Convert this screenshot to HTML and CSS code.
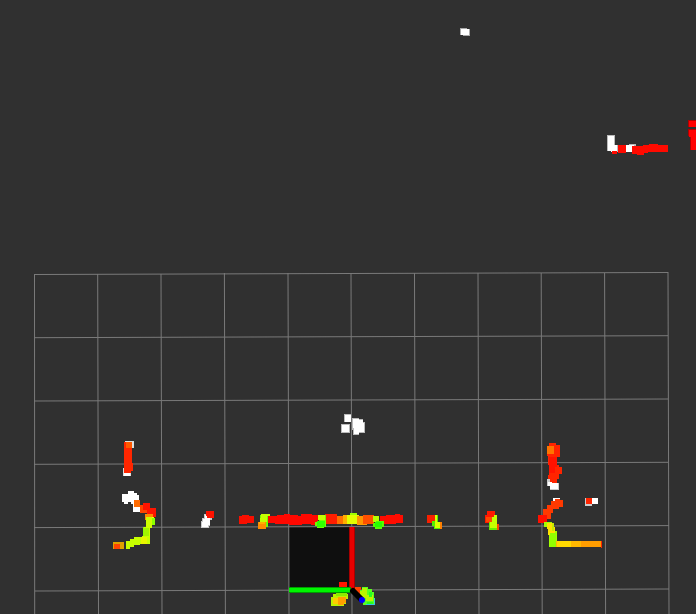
FILE: index.html
```html
<!DOCTYPE html>
<html lang="en">
<head>
<meta charset="utf-8">
<meta name="viewport" content="width=device-width, initial-scale=1">
<title>Point cloud view</title>
<link rel="stylesheet" href="styles.css">
</head>
<body>
<main class="viewport">
<svg class="scene" viewBox="0 0 696 614" role="img" aria-label="Laser scan points over a ground grid">
  <!-- occupied cell -->
  <path class="cell" d="M289 527H352V591H289z"/>

  <!-- ground grid -->
  <g class="grid">
    <path d="M34.5 274L34.7 614M97.7 274L98.5 614M161 274L162 614M224.4 273L225.4 614M288 273L289 614M351 273L352 614M414.5 273L415.5 614M478 273L479 614M541.2 273L542.2 614M604.6 273L605.6 614M668 272L669 614"/>
    <path d="M34 274.5L668 272.5M34 337.7L668 335.7M34 401L668 399M34 464.3L668 462.3M34 527.6L669 525.6M35 591L669 589"/>
  </g>

  <g class="points">
    <!-- far returns -->
    <path fill="#aaa" d="M460 28h7v1h3v7h-7v-1h-3z"/>
    <path fill="#fff" d="M461 29h8v6h-8z"/>
    <path fill="#bbb" d="M607 135h8v10h3v7h-7v-1h-4zM626 145h3v-1h7v8h-10zM645 145h3v3h-3z"/>
    <path fill="#fff" d="M608 136h6v9h3v7h-6v-1h-3zM626 145h8v7h-8z"/>
    <path fill="#ff0a00" d="M612 151h5v3h-5zM618 145h8v8h-8zM632 146h11v-1h6v-1h9v1h10v7h-20v1h-4v2h-7v-1h-5z"/>
    <path fill="#b00000" d="M688 120h8v7h-8zM688 129h8v21h-6v-14h-2z"/>
    <path fill="#f00" d="M689 121h7v6h-7zM689 130h7v20h-5v-13h-2z"/>

    <!-- centre white cluster -->
    <path fill="#bbb" d="M344 414h7v8h-7zM341 424h9v9h-9zM352 418h7v1h4v3h2v11h-6v2h-6v-5h-1z"/>
    <path fill="#fff" d="M345 415h6v7h-6zM342 425h7v7h-7zM353 419h6v1h4v3h1v9h-5v2h-5v-6h-1z"/>

    <!-- left column -->
    <path fill="#ddd" d="M125 441h9v7h-9zM123 468h8v8h-8z"/>
    <path fill="#fff" d="M124 469h6v7h-6z"/>
    <path fill="#ff2600" d="M124 442h8v21h1v8h-2v2h-7z"/>
    <path fill="#ff5a00" d="M126 442h6v6h-6z"/>
    <path fill="#fff" d="M122 494h6v-3h6v2h3v2h2v6h-3v3h-5v-2h-3v2h-4v-2h-2zM133 504h7v8h-7z"/>
    <path fill="#ff6b00" d="M134 500h6v7h-6z"/>
    <path fill="#ff4500" d="M140 505h7v8h-7z"/>
    <path fill="#ff1400" d="M143 503h7v5h6v9h-11v-3h2v-4h-4z"/>
    <path fill="#ff8a00" d="M145 514h8v6h-8z"/>
    <path fill="#ff0" d="M146 517h8v5h-8z"/>
    <path fill="#8cff00" d="M147 518h8v7h-8zM143 527h7v12h-7z"/>
    <path fill="#ceff00" d="M146 517h6v11h-2v10h-6v-11h2z"/>
    <path fill="#a3f500" d="M144 528h5v9h-5z"/>
    <path fill="#c8ff00" d="M126 541h4v-2h4v-2h8v-1h8v8h-10v1h-6v2h-4v2h-4z"/>
    <path fill="#e8f500" d="M141 537h6v7h-6z"/>
    <path fill="#e0a000" d="M113 542h11v7h-11z"/>
    <path fill="#ff4400" d="M114 544h6v5h-6z"/>
    <path fill="#ccc" d="M202 518h2v-4h6v1h2v5h-2v6h-1v2h-8v-7h1z"/>
    <path fill="#fff" d="M203 519h2v-4h5v10h-2v2h-6v-5h1z"/>
    <path fill="#ff1200" d="M206 511h8v7h-7v-2h-1z"/>

    <!-- wall across the centre -->
    <path fill="#f90f00" d="M239 516h3v-1h7v1h5v7h-7v1h-8z"/>
    <path fill="#ff0800" d="M268 516h9v-1h7v-1h6v1h8v1h3v-2h11v1h6v10h-7v-1h-9v1h-13v-1h-14v-1h-7z"/>
    <path fill="#6dff00" d="M260 515h8v12h-8z"/>
    <path fill="#c5ff00" d="M261 514h9v2h-3v6h-7z"/>
    <path fill="#ff8c00" d="M258 522h8v7h-8z"/>
    <path fill="#ffb000" d="M259 522h6v2h-6z"/>
    <path fill="#ff1e00" d="M325 514h12v10h-12z"/>
    <path fill="#70ff00" d="M319 515h7v12h-2v1h-7v-2h-2v-4h4z"/>
    <path fill="#c8ff00" d="M318 515h7v5h-7z"/>
    <path fill="#2fff00" d="M317 521h8v6h-8z"/>
    <path fill="#ff7000" d="M337 516h10v8h-10z"/>
    <path fill="#ffae00" d="M343 515h7v9h-7z"/>
    <path fill="#e3ff00" d="M347 515h3v-2h7v2h2v9h-12z"/>
    <path fill="#9eff00" d="M350 513h7v2h-7z"/>
    <path fill="#ff9700" d="M357 516h10v9h-10z"/>
    <path fill="#ff5000" d="M363 515h11v9h-11z"/>
    <path fill="#ff0c00" d="M380 516h6v-1h9v-1h5v1h3v8h-7v1h-12v1h-4z"/>
    <path fill="#baff00" d="M373 516h6v6h-6z"/>
    <path fill="#55ff00" d="M376 521h8v6h-2v2h-7v-2h-2v-4h3z"/>
    <path fill="#27ff00" d="M375 522h7v5h-7z"/>

    <!-- right posts -->
    <path fill="#f82000" d="M427 515h10v8h-10z"/>
    <path fill="#ff8000" d="M434 522h8v7h-7z"/>
    <path fill="#52f000" d="M432 521h3v-6h3v7h2v7h-6v-3h-2z"/>
    <path fill="#d8ff00" d="M435 515h2v7h3v6h-5z"/>
    <path fill="#ff1800" d="M487 511h8v6h-2v6h-8v-8h2z"/>
    <path fill="#ff4800" d="M486 517h6v5h-6zM492 524h7v6h-7z"/>
    <path fill="#66ed00" d="M489 522h8v8h-8z"/>
    <path fill="#c5ff00" d="M492 517h2v-2h3v13h-7v-6h2z"/>

    <!-- right column -->
    <path fill="#ff2400" d="M549 443h7v2h4v12h-3v8h2v2h3v7h-3v5h-2v4h-9v-8h1v-10h-1v-9h-1v-10h2z"/>
    <path fill="#ff1200" d="M549 457h8v10h-2v6h-6z"/>
    <path fill="#ff7400" d="M547 446h7v8h-7z"/>
    <path fill="#ccc" d="M547 479h3v4h9v7h-9v-4h-3z"/>
    <path fill="#fff" d="M548 482h4v1h6v6h-8v-3h-2zM553 498h7v3h-7z"/>
    <path fill="#ff3900" d="M543 509h4v-4h4v-4h4v-2h5v1h3v7h-4v2h-6v4h-2v6h-8z"/>
    <path fill="#ff1000" d="M538 515h9v8h-9z"/>
    <path fill="#a1ff00" d="M544 522h8v5h-8zM549 531h8v16h-8z"/>
    <path fill="#ffe100" d="M547 523h7v4h1v8h-7z"/>
    <path fill="#c8e900" d="M552 523h2v8h-2z"/>
    <path fill="#91ff00" d="M550 533h6v14h-6z"/>
    <path fill="#ffb800" d="M556 541h46v6h-46z"/>
    <path fill="#ffd900" d="M557 541h14v6h-14z"/>
    <path fill="#ff9d00" d="M581 541h20v6h-20z"/>
    <path fill="#ff2400" d="M601 541h1v7h-1z"/>
    <path fill="#ccc" d="M585 498h13v6h-6v2h-7z"/>
    <path fill="#fff" d="M592 498h6v6h-6z"/>
    <path fill="#ff2500" d="M586 498h6v6h-6z"/>
  </g>

  <!-- points around the origin -->
  <g class="points">
    <path fill="#ff1500" d="M339 582h8v7h-8z"/>
    <path fill="#bdf000" d="M333 594h15v5h-2v5h-2v2h-13v-9h2z"/>
    <path fill="#8beb00" d="M336 592h11v4h-11z"/>
    <path fill="#ffcc00" d="M333 598h5v6h-5z"/>
    <path fill="#ff9e00" d="M338 597h8v6h-2v2h-6z"/>
    <path fill="#ff4100" d="M355 587h6v8h-6z"/>
    <path fill="#59ff20" d="M362 587h6v2h4v3h2v6h1v7h-12v-5h-3v-10h2z"/>
    <path fill="#b9f600" d="M362 588h5v7h6v6h-7v-3h-6v-7h2z"/>
    <path fill="#25ff20" d="M369 592h3v5h-3zM367 602h6v2h-6z"/>
    <path fill="#35c9dc" d="M366 604h8v1h-8zM374 598h1v7h-1z"/>
  </g>

  <!-- axes: x red, y green, z black with a blue tip -->
  <path fill="#a80000" d="M349 527h6v63h-6z"/>
  <path fill="#e80000" d="M350 527h4v62h-4z"/>
  <path fill="#009d00" d="M289 587h62v6h-62z"/>
  <path fill="#00f500" d="M289 588h61v4h-61z"/>
  <path class="axis-z" d="M353 591L361 599"/>
  <circle cx="362" cy="600" r="3" fill="#00f"/>
</svg>
</main>
</body>
</html>
```
FILE: styles.css
```css
body {
  margin: 0;
  background: #303030;
}

.scene {
  display: block;
  width: 100%;
  height: auto;
}

.cell {
  fill: #0f0f0f;
}

.grid {
  fill: none;
  stroke: #7a7a7a;
  stroke-width: 1;
}

.points {
  shape-rendering: crispEdges;
}

.axis-z {
  fill: none;
  stroke: #000;
  stroke-width: 6;
  stroke-linecap: round;
}
```
